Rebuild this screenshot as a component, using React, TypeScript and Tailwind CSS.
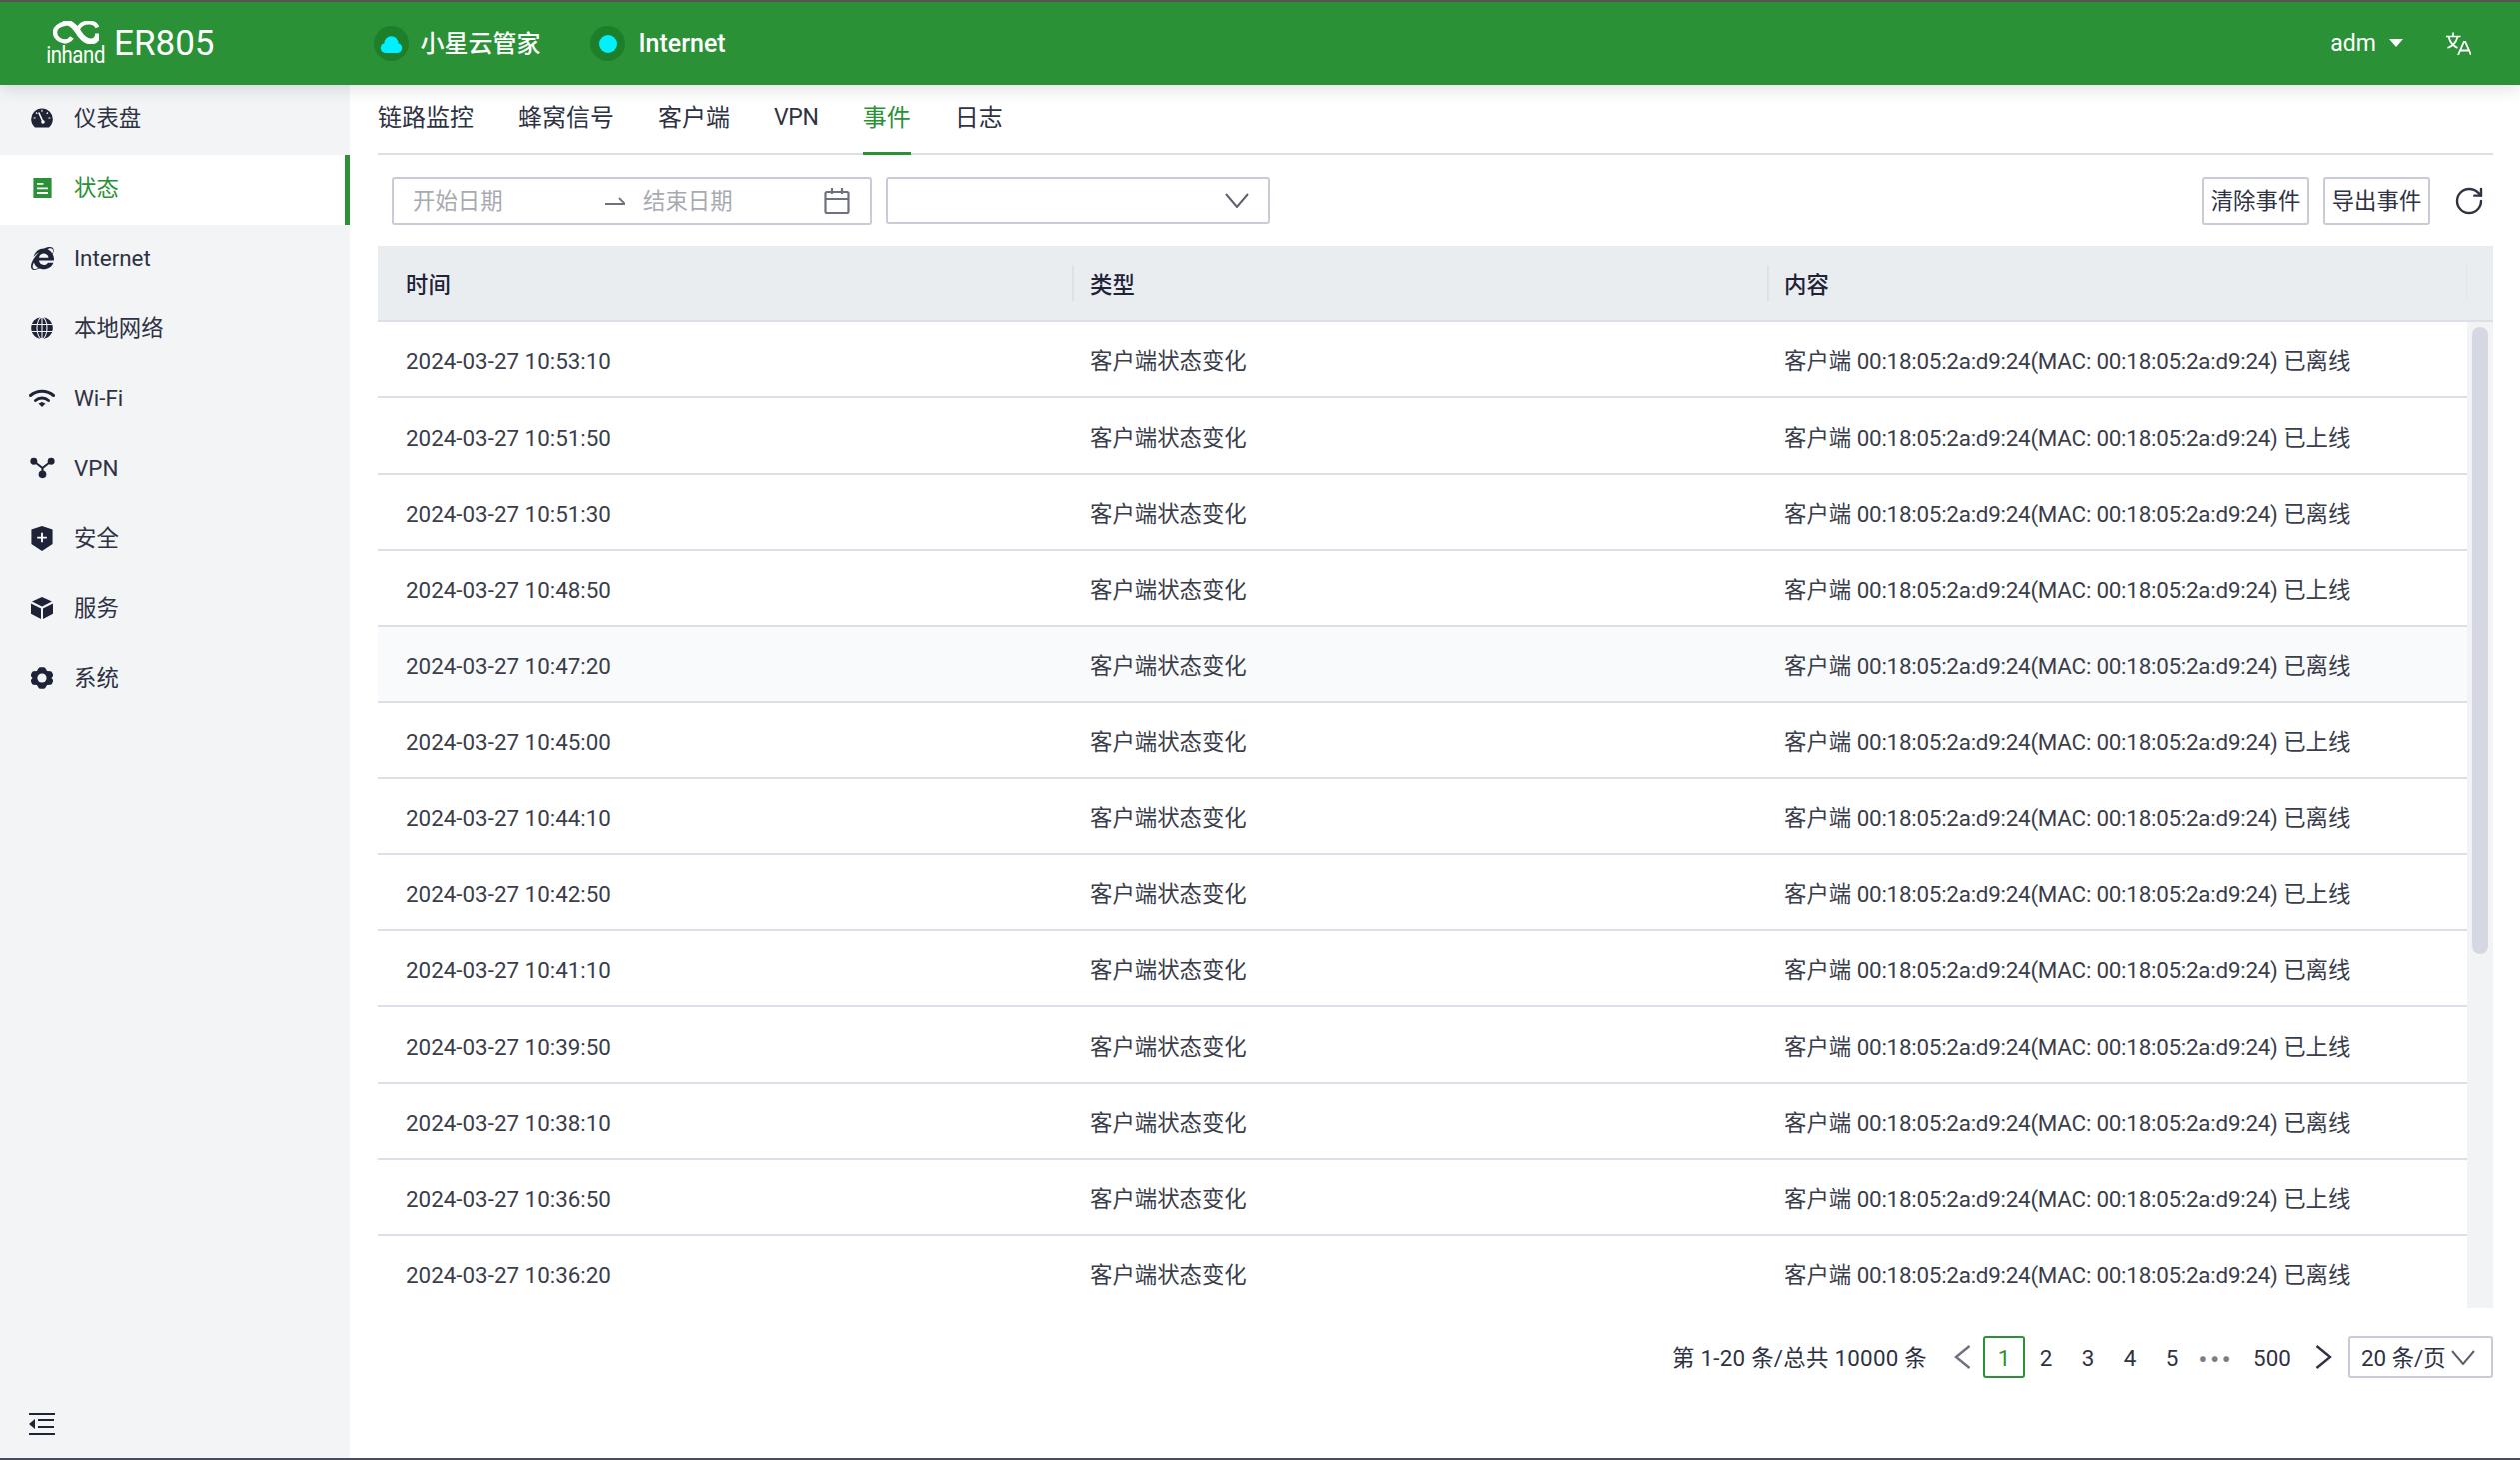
import { RotateCw } from 'lucide-react'
import { FaInternetExplorer } from 'react-icons/fa'

const ink = '#1f2338'

const rows = [
  ['2024-03-27 10:53:10', '已离线'],
  ['2024-03-27 10:51:50', '已上线'],
  ['2024-03-27 10:51:30', '已离线'],
  ['2024-03-27 10:48:50', '已上线'],
  ['2024-03-27 10:47:20', '已离线'],
  ['2024-03-27 10:45:00', '已上线'],
  ['2024-03-27 10:44:10', '已离线'],
  ['2024-03-27 10:42:50', '已上线'],
  ['2024-03-27 10:41:10', '已离线'],
  ['2024-03-27 10:39:50', '已上线'],
  ['2024-03-27 10:38:10', '已离线'],
  ['2024-03-27 10:36:50', '已上线'],
  ['2024-03-27 10:36:20', '已离线'],
]

function GaugeIcon() {
  return (
    <svg viewBox="0 0 22 22" className="h-[22px] w-[22px]">
      <path d="M4 20.5A10.8 10.8 0 1 1 18 20.5Z" fill={ink} />
      <path d="M8 6l3.6 8" stroke="#fff" strokeWidth="1.6" strokeLinecap="round" />
      <circle cx="12" cy="15" r="1.8" fill="#fff" />
      <path d="M11 2.8v2M5 5.5l1.3 1.3M17 5.5l-1.3 1.3M2.6 11h2M17.4 11h2" stroke="#fff" strokeWidth="1.1" />
    </svg>
  )
}

function StatusIcon() {
  return (
    <svg viewBox="0 0 20 22" className="h-[20px] w-[19px]">
      <rect x="0" y="0" width="20" height="22" fill="#2a9136" />
      <path d="M4 6.5h7M4 11.5h12M4 16.5h12" stroke="#fff" strokeWidth="2" />
    </svg>
  )
}

function GlobeIcon() {
  return (
    <svg viewBox="0 0 22 22" className="h-[22px] w-[22px]">
      <circle cx="11" cy="11" r="10.8" fill={ink} />
      <path d="M0 7.5h22M0 14.5h22M11 0v22" stroke="#f3f4f6" strokeWidth="1.1" />
      <ellipse cx="11" cy="11" rx="5" ry="10.8" fill="none" stroke="#f3f4f6" strokeWidth="1.1" />
    </svg>
  )
}

function WifiIcon() {
  return (
    <svg viewBox="0 0 26 18" className="h-[18px] w-[26px]">
      <path d="M1.500 6.500C8 .8 18 .8 24.500 6.500" fill="none" stroke={ink} strokeWidth="3" strokeLinecap="round" />
      <path d="M6.500 11.500C10 8.300 16 8.300 19.500 11.500" fill="none" stroke={ink} strokeWidth="3" strokeLinecap="round" />
      <path d="M9.500 14.500L13 13l3.500 1.500L13 18Z" fill={ink} />
    </svg>
  )
}

function VpnIcon() {
  return (
    <svg viewBox="0 0 26 22" className="h-[22px] w-[25px]">
      <path d="M4 4l9 7 9-7M13 11v7" stroke={ink} strokeWidth="2.200" fill="none" />
      <circle cx="4" cy="4" r="3.600" fill={ink} />
      <circle cx="22" cy="4" r="3.600" fill={ink} />
      <circle cx="13" cy="17.600" r="4" fill={ink} />
    </svg>
  )
}

function ShieldIcon() {
  return (
    <svg viewBox="0 0 22 26" className="h-[25px] w-[22px]">
      <path d="M11 0l11 3.600v15L11 26 0 18.600v-15Z" fill={ink} />
      <path d="M11 7v10M6 12h10" stroke="#fff" strokeWidth="1.900" />
    </svg>
  )
}

function CubeIcon() {
  return (
    <svg viewBox="0 0 22 22" className="h-[22px] w-[22px]">
      <path d="M11 0l10 4.600L11 9.600 1 4.600Z" fill={ink} />
      <path d="M0 6.400l10 5V22L0 16.800Z" fill={ink} />
      <path d="M22 6.400l-10 5V22l10-5.200Z" fill={ink} />
    </svg>
  )
}

function GearIcon() {
  return (
    <svg viewBox="0 0 22 22" className="h-[22px] w-[22px]">
      <path
        d="M7.600 1.200a2 2 0 0 1 1.700-1h3.400a2 2 0 0 1 1.700 1l1.700 2.800 3.300.2a2 2 0 0 1 1.600 1l.9 2a2 2 0 0 1 0 2l-1.400 1.800 1.400 1.800a2 2 0 0 1 0 2l-.9 2a2 2 0 0 1-1.600 1l-3.300.2-1.700 2.700a2 2 0 0 1-1.700 1H9.300a2 2 0 0 1-1.700-1l-1.700-2.700-3.300-.2a2 2 0 0 1-1.600-1l-.9-2a2 2 0 0 1 0-2L1.500 11 .1 9.200a2 2 0 0 1 0-2l.9-2a2 2 0 0 1 1.600-1L5.900 4Z"
        fill={ink}
      />
      <circle cx="11" cy="11" r="4.600" fill="#f3f4f6" />
    </svg>
  )
}

function Vee({ className, color = '#5d606e' }: { className: string; color?: string }) {
  return (
    <svg viewBox="0 0 24 15" className={className}>
      <path d="M1 1l11 13L23 1" fill="none" stroke={color} strokeWidth="2" />
    </svg>
  )
}

function Arrow({ dir, color }: { dir: 'left' | 'right'; color: string }) {
  return (
    <svg viewBox="0 0 17 24" className="h-[24px] w-[17px]">
      <path d={dir === 'left' ? 'M15.500 1L2 12l13.500 11' : 'M1.500 1L15 12 1.500 23'} fill="none" stroke={color} strokeWidth="2.400" />
    </svg>
  )
}

function TranslateIcon() {
  return (
    <svg viewBox="0 0 25 23" className="h-[23px] w-[25px]">
      <path d="M0 4.500h14.500M7 .5v4M2.500 4.500c1 5 5 9.500 9 11.500M11.500 4.500c-1 5-5 9.500-10 11.500" fill="none" stroke="#fff" strokeWidth="1.700" />
      <path d="M12 23l5.800-13h1.400L25 23M14 18.500h9" fill="none" stroke="#fff" strokeWidth="1.800" />
    </svg>
  )
}

const menu = [
  { label: '仪表盘', icon: <GaugeIcon /> },
  { label: '状态', icon: <StatusIcon />, active: true },
  { label: 'Internet', icon: <FaInternetExplorer className="h-[23px] w-[23px] text-[#1f2338]" /> },
  { label: '本地网络', icon: <GlobeIcon /> },
  { label: 'Wi-Fi', icon: <WifiIcon /> },
  { label: 'VPN', icon: <VpnIcon /> },
  { label: '安全', icon: <ShieldIcon /> },
  { label: '服务', icon: <CubeIcon /> },
  { label: '系统', icon: <GearIcon /> },
]

const tabs = ['链路监控', '蜂窝信号', '客户端', 'VPN', '事件', '日志']

function Logo() {
  return (
    <div className="flex w-[58px] flex-col items-center">
      <svg viewBox="0 0 46 23" className="h-[23px] w-[46px]">
        <path d="M13 2.500C6 3.500 2 7 2 11.500S6 20 12 20.500c3 0 5-1.500 7-4" fill="none" stroke="#fff" strokeWidth="4.400" />
        <path d="M10 1.500c7-1 11 3 15 9 3 5 7 10 13 10 5 0 7-4 7-8" fill="none" stroke="#fff" strokeWidth="5.800" />
        <path d="M25 8c2-4 6-6.500 11-6.500 4 0 7 1.500 8.500 5" fill="none" stroke="#fff" strokeWidth="4" />
        <path d="M31 10.500c3 2.500 7 2.500 10 .5" fill="none" stroke="#2a9136" strokeWidth="2" />
      </svg>
      <span className="-mt-[1px] scale-x-[0.85] font-['Roboto',sans-serif] text-[24px] leading-[24px] font-normal tracking-[-0.5px] text-white">
        inhand
      </span>
    </div>
  )
}

function StatusDot({ children }: { children?: React.ReactNode }) {
  return (
    <span className="flex h-[35px] w-[35px] items-center justify-center rounded-full bg-[#1e7f2a]">
      {children ?? <span className="h-[18px] w-[18px] rounded-full bg-[#00f0ff]" />}
    </span>
  )
}

function Header() {
  return (
    <header className="relative z-10 flex h-[83px] shrink-0 items-center bg-[#2a9136] pl-[47px] text-white shadow-[0_4px_16px_rgba(0,0,0,0.12)]">
      <Logo />
      <span className="ml-[9px] font-['Roboto',sans-serif] text-[35px] leading-none font-normal">ER805</span>
      <div className="ml-[160px] flex items-center">
        <StatusDot>
          <svg viewBox="0 0 22 18" className="h-[18px] w-[23px]">
            <path d="M5 18a5 5 0 0 1-1-9.800 7 7 0 0 1 14 0A5 5 0 0 1 17 18Z" fill="#00f0ff" />
          </svg>
        </StatusDot>
        <span className="ml-[11px] pt-[1px] text-[24px] font-medium">小星云管家</span>
      </div>
      <div className="ml-[50px] flex items-center">
        <StatusDot />
        <span className="ml-[13px] pt-[1px] text-[25px] font-medium">Internet</span>
      </div>
      <div className="mr-[49px] ml-auto flex items-center">
        <span className="pt-[1px] text-[23px]">adm</span>
        <span className="mt-[-2px] ml-[13px] h-0 w-0 border-x-[7px] border-t-[8px] border-x-transparent border-t-white" />
        <span className="ml-[43px]">
          <TranslateIcon />
        </span>
      </div>
    </header>
  )
}

function Sidebar() {
  return (
    <aside className="flex w-[350px] shrink-0 flex-col bg-[#f3f4f6]">
      {menu.map((item) => (
        <div
          key={item.label}
          className={
            item.active
              ? 'flex h-[70px] items-center border-r-[5px] border-[#2a9136] bg-white pb-[4px] text-[#2a9136]'
              : 'flex h-[70px] items-center pb-[4px] text-[#2e3243]'
          }
        >
          <span className="flex w-[84px] shrink-0 items-center justify-center">{item.icon}</span>
          <span className="-ml-[10px] pt-[2px]">{item.label}</span>
        </div>
      ))}
      <div className="mt-auto pb-[23px] pl-[29px]">
        <svg viewBox="0 0 26 22" className="h-[22px] w-[26px]">
          <path d="M0 1h26M0 21h26M9 7h16M9 14h16" stroke={ink} strokeWidth="2" />
          <path d="M6 6v10l-6-5Z" fill={ink} />
        </svg>
      </div>
    </aside>
  )
}

function Tabs() {
  return (
    <nav className="flex h-[70px] shrink-0 gap-[44px] border-b-2 border-[#dddee8] text-[24px] text-[#2e3243]">
      {tabs.map((tab) => (
        <span
          key={tab}
          className={
            tab === '事件'
              ? 'mb-[-2px] flex items-center border-b-[3px] border-[#2a9136] pb-[2px] text-[#2a9136]'
              : tab === 'VPN'
                ? 'flex items-center pb-[2px] text-[23px] tracking-[-0.3px]'
                : 'flex items-center pb-[2px]'
          }
        >
          {tab}
        </span>
      ))}
    </nav>
  )
}

function Toolbar() {
  return (
    <div className="flex h-[91px] shrink-0 items-center pl-[14px]">
      <div className="flex h-[48px] w-[480px] items-center rounded-[3px] border-2 border-[#c9ccd8] pl-[19px] text-[#a8aab2]">
        <span className="w-[192px] pt-[2px]">开始日期</span>
        <svg viewBox="0 0 20 8" className="h-[8px] w-[20px]">
          <path d="M0 7h20L14 1" fill="none" stroke="#6e7180" strokeWidth="1.800" />
        </svg>
        <span className="ml-[18px] pt-[2px]">结束日期</span>
        <svg viewBox="0 0 26 26" className="mr-[20px] ml-auto h-[26px] w-[26px]">
          <rect x="1.500" y="4" width="23" height="21" rx="1.500" fill="none" stroke="#6e7180" strokeWidth="2.200" />
          <path d="M1.500 11h23M8 0v6M18 0v6" stroke="#6e7180" strokeWidth="2.200" />
        </svg>
      </div>
      <div className="ml-[14px] flex h-[47px] w-[385px] items-center justify-end rounded-[3px] border-2 border-[#c9ccd8] pr-[20px]">
        <Vee className="h-[15px] w-[24px]" />
      </div>
      <button className="ml-auto h-[48px] w-[107px] rounded-[3px] border-2 border-[#c9ccd8] pt-[2px] text-[#2e3243]">清除事件</button>
      <button className="ml-[14px] h-[48px] w-[107px] rounded-[3px] border-2 border-[#c9ccd8] pt-[2px] text-[#2e3243]">导出事件</button>
      <RotateCw className="mr-[8px] ml-[23px] h-[32px] w-[32px] text-[#2e3243]" strokeWidth={1.800} />
    </div>
  )
}

function EventTable() {
  return (
    <div className="flex h-[1063px] shrink-0 flex-col">
      <div className="flex h-[76px] shrink-0 items-center border-b-2 border-[#dddee8] bg-[#eaedf0] font-medium text-[#1f2338]">
        <div className="flex w-[696px] items-center justify-between pl-[28px]">
          <span className="pt-[6px]">时间</span>
          <span className="h-[36px] w-[2px] bg-[#dfe1e6]" />
        </div>
        <div className="flex w-[696px] items-center justify-between pl-[16px]">
          <span className="pt-[6px]">类型</span>
          <span className="h-[36px] w-[2px] bg-[#dfe1e6]" />
        </div>
        <div className="flex flex-1 items-center justify-between pr-[26px] pl-[15px]">
          <span className="pt-[6px]">内容</span>
          <span className="h-[36px] w-[1px] bg-[#e3e5e9]" />
        </div>
      </div>
      <div className="flex min-h-0 flex-1">
        <div className="min-w-0 flex-1 overflow-hidden">
          {rows.map(([time, state], i) => (
            <div
              key={time}
              className={
                i === 4
                  ? 'flex h-[76.25px] shrink-0 items-center border-b-2 border-[#dddee8] bg-[#f9fafc] pt-[6px] text-[#3a3d4a]'
                  : 'flex h-[76.25px] shrink-0 items-center border-b-2 border-[#dddee8] pt-[6px] text-[#3a3d4a]'
              }
            >
              <span className="w-[696px] pl-[28px]">{time}</span>
              <span className="w-[696px] pl-[16px]">客户端状态变化</span>
              <span className="pl-[15px]">
                客户端 <span className="tracking-[-0.24px]">00:18:05:2a:d9:24(MAC: 00:18:05:2a:d9:24)</span> {state}
              </span>
            </div>
          ))}
        </div>
        <div className="w-[26px] shrink-0 bg-[#f2f3f5] px-[5px] pt-[5px]">
          <div className="h-[628px] rounded-full bg-[#d5d7e2]" />
        </div>
      </div>
    </div>
  )
}

function Pagination() {
  return (
    <div className="flex items-start justify-end pt-[28px] text-[#2e3243]">
      <div className="flex h-[42px] items-center">
        <span className="pt-[3px] tracking-[0.25px]">第 1-20 条/总共 10000 条</span>
        <span className="mr-[12px] ml-[27px]">
          <Arrow dir="left" color="#6e7180" />
        </span>
        <span className="flex h-[42px] w-[42px] items-center justify-center rounded-[3px] border-2 border-[#2a9136] pt-[3px] text-[#2a9136]">1</span>
        {['2', '3', '4', '5'].map((p) => (
          <span key={p} className="flex h-[42px] w-[42px] items-center justify-center pt-[3px]">{p}</span>
        ))}
        <span className="flex h-[42px] w-[42px] items-center justify-center pt-[5px] pl-[4px] text-[24px] font-bold tracking-[3px] text-[#7a7c88]">•••</span>
        <span className="mr-[6px] flex h-[42px] w-[74px] items-center justify-center pt-[3px]">500</span>
        <Arrow dir="right" color="#2e3243" />
        <div className="ml-[16px] flex h-[42px] w-[145px] items-center rounded-[3px] border-2 border-[#c9ccd8] pl-[11px]">
          <span className="pt-[3px]">20 条/页</span>
          <Vee className="mr-[16px] ml-auto h-[15px] w-[24px]" />
        </div>
      </div>
    </div>
  )
}

export default function App() {
  return (
    <div className="flex h-[1461px] w-[2521px] flex-col overflow-hidden border-t-2 border-b-2 border-t-[#555555] border-b-[#4a4b60] bg-white font-['Roboto','Noto_Sans_CJK_SC',sans-serif] text-[22.4px]">
      <Header />
      <div className="flex min-h-0 flex-1">
        <Sidebar />
        <main className="flex min-w-0 flex-1 flex-col pr-[27px] pl-[28px]">
          <Tabs />
          <Toolbar />
          <EventTable />
          <Pagination />
        </main>
      </div>
    </div>
  )
}
